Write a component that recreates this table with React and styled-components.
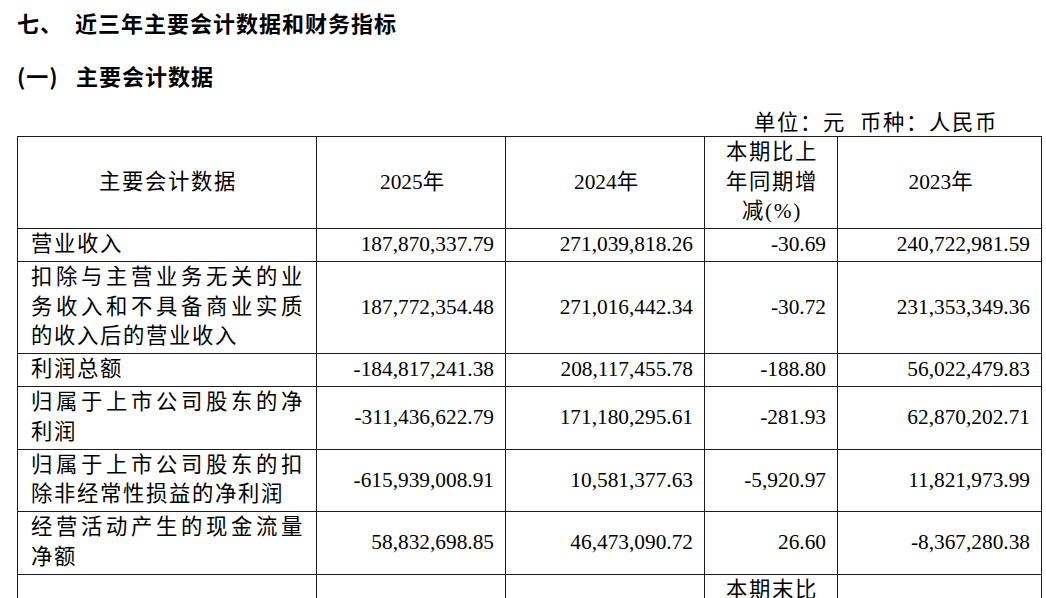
import styled, { createGlobalStyle } from 'styled-components'

const GlobalStyle = createGlobalStyle`
  html, body {
    margin: 0;
    padding: 0;
    background: #fff;
    overflow: hidden;
  }
`

const Page = styled.div`
  width: 1024px;
  padding: 7px 0 0 17px;
  color: #000;
  font-family: 'Liberation Serif', 'Noto Sans CJK SC', serif;
`

const Heading = styled.h2`
  display: flex;
  margin: ${(p) => (p.$sub ? '23px 0 0' : '0')};
  font-family: 'Noto Sans CJK SC', sans-serif;
  font-size: 22px;
  font-weight: 700;
  line-height: 30px;
  letter-spacing: 1px;
`

const HeadingNo = styled.span`
  width: ${(p) => p.$w}px;
  flex: none;
`

const UnitLine = styled.div`
  margin-top: 16px;
  padding-right: 43px;
  text-align: right;
  font-family: 'Noto Sans CJK SC', sans-serif;
  font-size: 21.33px;
  line-height: 30px;
  letter-spacing: 1.67px;
`

const UnitGap = styled.span`
  display: inline-block;
  width: 14px;
`

const Table = styled.table`
  width: 1024px;
  border-collapse: collapse;
  table-layout: fixed;
  font-size: 21.33px;
  line-height: 29.5px;
`

const Col = styled.col`
  width: ${(p) => p.$w}px;
`

const Cell = styled.td`
  border: 1px solid #1c1c1c;
  padding: 1.25px 11px 1.25px 13px;
  vertical-align: middle;
  text-align: ${(p) => p.$align || 'right'};
  letter-spacing: ${(p) => (p.$spaced ? '1.67px' : '0')};
  font-weight: 400;
`

const LabelCell = styled(Cell)`
  text-align: justify;
  text-align-last: left;
  padding-right: 12px;
`

const Year = styled.span`
  letter-spacing: 0;
`

const widths = [299, 189, 199, 133, 204]

const rows = [
  ['营业收入', '187,870,337.79', '271,039,818.26', '-30.69', '240,722,981.59'],
  [
    '扣除与主营业务无关的业务收入和不具备商业实质的收入后的营业收入',
    '187,772,354.48',
    '271,016,442.34',
    '-30.72',
    '231,353,349.36',
  ],
  ['利润总额', '-184,817,241.38', '208,117,455.78', '-188.80', '56,022,479.83'],
  [
    '归属于上市公司股东的净利润',
    '-311,436,622.79',
    '171,180,295.61',
    '-281.93',
    '62,870,202.71',
  ],
  [
    '归属于上市公司股东的扣除非经常性损益的净利润',
    '-615,939,008.91',
    '10,581,377.63',
    '-5,920.97',
    '11,821,973.99',
  ],
  [
    '经营活动产生的现金流量净额',
    '58,832,698.85',
    '46,473,090.72',
    '26.60',
    '-8,367,280.38',
  ],
]

const App = () => {
  return (
    <Page>
      <GlobalStyle />
      <Heading>
        <HeadingNo $w={58}>七、</HeadingNo>
        <span>近三年主要会计数据和财务指标</span>
      </Heading>
      <Heading $sub>
        <HeadingNo $w={59}>(一)</HeadingNo>
        <span>主要会计数据</span>
      </Heading>
      <UnitLine>
        单位：元<UnitGap />币种：人民币
      </UnitLine>
      <Table>
        <colgroup>
          {widths.map((w, i) => (
            <Col key={i} $w={w} />
          ))}
        </colgroup>
        <tbody>
          <tr>
            <Cell as='th' $align='center' $spaced>
              主要会计数据
            </Cell>
            <Cell as='th' $align='center'>
              <Year>2025</Year>年
            </Cell>
            <Cell as='th' $align='center'>
              <Year>2024</Year>年
            </Cell>
            <Cell as='th' $align='center' $spaced>
              本期比上年同期增减(%)
            </Cell>
            <Cell as='th' $align='center'>
              <Year>2023</Year>年
            </Cell>
          </tr>
          {rows.map((r) => (
            <tr key={r[0]}>
              <LabelCell $align='left' $spaced>
                {r[0]}
              </LabelCell>
              {r.slice(1).map((v, i) => (
                <Cell key={i} $align='right'>
                  {v}
                </Cell>
              ))}
            </tr>
          ))}
          <tr>
            <Cell as='th' $align='center' />
            <Cell as='th' $align='center' />
            <Cell as='th' $align='center' />
            <Cell as='th' $align='center' $spaced>
              本期末比
            </Cell>
            <Cell as='th' $align='center' />
          </tr>
        </tbody>
      </Table>
    </Page>
  )
}

export default App
